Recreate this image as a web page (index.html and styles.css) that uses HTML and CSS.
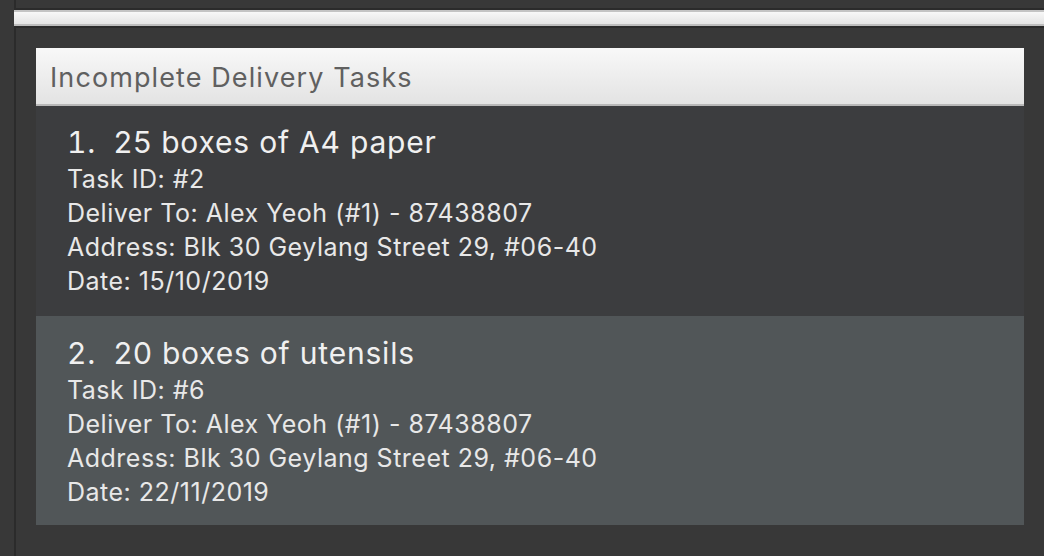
FILE: index.html
```html
<!DOCTYPE html>
<html>
<head>
<meta charset="utf-8">
<link rel="stylesheet" href="styles.css">
</head>
<body>
<div class="app">
  <div class="side"></div>
  <div class="main">
    <div class="topgap"></div>
    <div class="toolbar"></div>
    <div class="content">
      <div class="panel">
        <div class="panel-header">Incomplete Delivery Tasks</div>
        <div class="task odd">
          <div class="title"><span class="num">1.  </span>25 boxes of A4 paper</div>
          <div class="line">Task ID: #2</div>
          <div class="line">Deliver To: Alex Yeoh (#1) - 87438807</div>
          <div class="line">Address: Blk 30 Geylang Street 29, #06-40</div>
          <div class="line">Date: 15/10/2019</div>
        </div>
        <div class="task even">
          <div class="title"><span class="num">2.  </span>20 boxes of utensils</div>
          <div class="line">Task ID: #6</div>
          <div class="line">Deliver To: Alex Yeoh (#1) - 87438807</div>
          <div class="line">Address: Blk 30 Geylang Street 29, #06-40</div>
          <div class="line">Date: 22/11/2019</div>
        </div>
      </div>
    </div>
  </div>
</div>
</body>
</html>
```

FILE: styles.css
```css
html, body {
  margin: 0;
  padding: 0;
  background: #383838;
}
body {
  width: 1044px;
  height: 556px;
  overflow: hidden;
  font-family: Inter, "Noto Sans", sans-serif;
}
.app {
  display: flex;
  height: 556px;
}
.side {
  width: 14px;
  flex: none;
  background: #383838;
}
.main {
  flex: 1;
  display: flex;
  flex-direction: column;
  border-left: 2px solid #2b2b2b;
}
.topgap {
  height: 8px;
  border-bottom: 2px solid #2b2b2b;
  background: #383838;
}
.toolbar {
  height: 12px;
  margin-left: -2px;
  border-top: 2px solid #c4c4c4;
  border-bottom: 2px solid #bdbdbd;
  background: linear-gradient(#f8f8f8, #e4e4e4);
}
.content {
  border-top: 2px solid #2b2b2b;
  padding: 20px 20px 0 20px;
  flex: 1;
}
.panel {
  width: 988px;
}
.panel-header {
  height: 56px;
  border-bottom: 2px solid #b8b8b8;
  background: linear-gradient(#f8f8f8, #e3e3e3);
  color: #606060;
  font-size: 27px;
  letter-spacing: 1.1px;
  line-height: 60px;
  padding-left: 14px;
  overflow: hidden;
}
.task {
  height: 210px;
  box-sizing: border-box;
  padding: 17px 0 0 31px;
  color: #e8e8e8;
}
.task.odd {
  background: #3c3d3f;
}
.task.even {
  background: #515658;
  height: 209px;
  padding-top: 18px;
}
.title {
  white-space: pre;
  font-size: 30px;
  letter-spacing: 0.8px;
  line-height: 39px;
  color: #f0f0f0;
}
.num {
  font-variant-numeric: tabular-nums;
}
.line {
  font-size: 25px;
  letter-spacing: 0.5px;
  line-height: 34px;
}
```
